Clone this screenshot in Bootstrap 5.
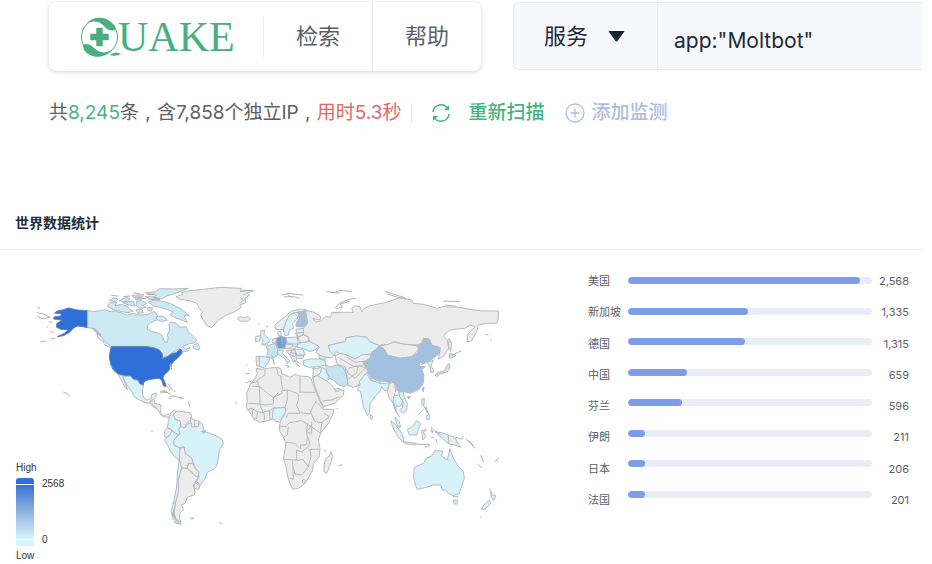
<!DOCTYPE html>
<html lang="zh-CN">
<head>
<meta charset="utf-8">
<meta name="viewport" content="width=device-width, initial-scale=1">
<title>QUAKE</title>
<link href="https://cdn.jsdelivr.net/npm/bootstrap@5.3.0/dist/css/bootstrap.min.css" rel="stylesheet">
<style>
body{font-family:Inter,"Noto Sans CJK SC",sans-serif;color:#5c5f66;background:#fff}
a{color:inherit;text-decoration:none}
.topbar{padding:2px 10px 0 49px;gap:32px}
.nav-card{border-radius:8px;box-shadow:0 1px 4px rgba(60,60,80,.22);height:69px;font-size:22px}
.brand-link{padding:0 28px 0 32px;border-right:1px solid #ececf1;height:40px}
.menu-link{padding:0 32px}
.menu-link + .menu-link{border-left:1px solid #eaebf2}
.search-box{height:68px;background:#f7f8fc;border:1px solid #e9ebf2;border-right:0;border-radius:6px 0 0 6px;color:#20293a;font-size:22px}
.kind{border:0;border-right:1px solid #e9ebf2;background:transparent;color:inherit;padding:0 32px 0 30px;gap:20px}
.query{border:0;background:transparent;color:inherit;padding:10px 16px 0;outline:0;min-width:0;font-size:21px}
.stats{padding:27px 10px 0 49px;font-size:19px;line-height:30px}
.comma{width:18px}
.green{color:#43b581}.red{color:#e0695f}.lilac{color:#aebbe3}
.rule{width:1px;height:19px;background:#e6e8f0;margin-left:10px}
.monitor{margin-left:21px;gap:6px;border:0;background:none;padding:0;font-weight:500}
.rescan-btn{margin-left:19px;gap:17px;border:0;background:none;padding:0;font-weight:500}
.world{padding-top:83px;margin-right:10px}
.world h2{font-size:14px;line-height:24px;font-weight:700;color:#222b3d;padding:0 15px 14px;margin:0;border-bottom:1px solid #eee}
.panels{display:grid;grid-template-columns:588fr 334fr}
.scale{position:absolute;left:16px;bottom:1px;font-size:10px;line-height:12px;color:#333;font-family:"Liberation Sans",sans-serif}
.ramp{width:18px;height:68px;border-radius:3px;background:linear-gradient(#2f70d8 0 6px,#fff 6px 7px,#3573d6 7px,#93b2dd 50%,#d7f3fb 61px,#fff 61px 62px,#d7f3fb 62px)}
.ranking{padding:22px 13px 0 0;font-size:11px;line-height:18px}
.ranking ul{height:237px}
.names{width:40px}
.bars{height:226px;padding-top:5px}
.bars .progress{height:7px;background:#eaedf6;border-radius:4px}
.bars .progress-bar{background:#7d9de8;border-radius:4px}
.counts{width:37px}
.land path{stroke:#b7babc;stroke-width:1;vector-effect:non-scaling-stroke;stroke-linejoin:round;fill:#ececec}
.land .lo{fill:#d7f2fa}.land .ca{fill:#cde9f4}.land .us{fill:#2f70d8;stroke:#5c80b8}.land .cn{fill:#a2c1e1}.land .de{fill:#759fd6}.land .mid{fill:#c5e3f2}
.land .edge{fill:none}
.land .isle{fill:none;stroke:#b0b4b6}
</style>
</head>
<body>
<header class="topbar d-flex">
 <nav class="nav-card d-flex align-items-stretch bg-white flex-shrink-0">
  <a href="#" class="brand-link d-flex align-items-center align-self-center" aria-label="QUAKE">
   <svg width="154" height="56" viewBox="81 8 154 56" fill="#4aae80">
    <circle cx="99.500" cy="36" r="18" fill="none" stroke="#4aae80" stroke-width="1"/>
    <path d="M87 22C93 15 106 15 112 22Q117 26 115 29Q109 31 104 25Q97 18 87 22Z"/>
    <path d="M83 44Q88 41 93 46Q101 55 112 49C105 58 90 58 84 49Z"/>
    <path d="M111 53Q116 50 121 53Q115 56 110 54Z"/>
    <path d="M97 27.500h5v6h6v5h-6v6h-5v-6h-6v-5h6z" stroke="#4aae80" stroke-width="1.500" stroke-linejoin="round"/>
    <text x="118" y="50" font-family="Liberation Serif,serif" font-size="42">UAKE</text>
   </svg>
  </a>
  <a href="#" class="menu-link d-flex align-items-center">检索</a>
  <a href="#" class="menu-link d-flex align-items-center">帮助</a>
 </nav>
 <form class="search-box d-flex flex-grow-1 overflow-hidden">
  <button type="button" class="kind d-flex align-items-center flex-shrink-0">服务
   <svg width="17" height="11" viewBox="0 0 17 11"><path d="M1 0h15q1 0 0 1L9.500 10q-1 1-2 0L1 1Q0 0 1 0Z" fill="#1c2536"/></svg>
  </button>
  <input class="query flex-grow-1" type="text" aria-label="查询" value="app:&quot;Moltbot&quot;">
 </form>
</header>

<div class="stats d-flex align-items-center text-nowrap">
 <div>共<span class="green">8,245</span>条<span class="comma d-inline-block text-center">,</span>含7,858个独立IP<span class="comma d-inline-block text-center">,</span><span class="red">用时5.3秒</span></div>
 <span class="rule"></span>
 <button type="button" class="rescan-btn green d-flex align-items-center">
  <svg width="20" height="20" viewBox="0 0 20 20" fill="none" stroke="#43b581" stroke-width="1.500"><path d="M2 9A8 8 0 0 1 17 6M18 11A8 8 0 0 1 3 14"/><path d="M18 2v5h-5zM2 18v-5h5z" fill="#43b581" stroke="none"/></svg>重新扫描</button>
 <button type="button" class="monitor lilac d-flex align-items-center">
  <svg width="20" height="20" viewBox="0 0 20 20" fill="none" stroke="#aebbe3" stroke-width="1.300"><circle cx="10" cy="10" r="9"/><path d="M10 5.500v9M5.500 10h9"/></svg>添加监测</button>
</div>

<section class="world">
 <h2>世界数据统计</h2>
 <div class="panels">
  <div class="position-relative">
   <svg class="land d-block w-100" viewBox="0 250 588 313" role="img" aria-label="世界地图">
    <!-- North America -->
    <g transform="translate(80 270) scale(.33333)">
     <path class="us" d="M23 122L-8 120L-35 114L-50 119L-68 123L-76 129L-55 132L-58 138L-78 141L-79 147L-55 150L-62 156L-70 161L-70 172L-57 178L-35 179L-45 189L-68 200L-50 197L-33 188L-20 175L-8 168L8 170L23 173Z"/>
     <path class="ca" d="M23 122L40 125L60 122L75 119L90 125L110 125L128 130L140 136L160 130L180 135L200 134L212 130L222 124L232 136L238 148L222 152L213 158L203 165L202 178L215 184L235 190L248 197L252 212L260 219L264 205L262 193L270 180L266 165L272 156L290 160L300 172L318 170L325 185L340 200L350 210L345 218L325 222L308 230L318 238L330 232L325 243L308 246L300 236L290 240L275 250L262 258L247 265L247 252L238 240L222 233L200 229L93 229L82 222L70 210L60 195L45 178L30 174L23 173Z"/>
     <path class="us" d="M93 230L200 230L222 234L238 240L247 252L247 266L262 260L278 250L290 248L298 238L305 240L306 250L292 265L280 275L275 283L270 290L266 303L252 315L249 325L256 340L257 350L250 347L245 330L236 325L218 327L203 330L192 335L190 346L180 342L172 330L160 328L152 318L135 318L115 313L100 300L92 282L88 262L90 245Z"/>
     <path class="lo" d="M115 314L135 319L152 319L160 329L172 331L180 343L190 347L187 365L190 382L202 390L213 385L216 372L229 370L228 380L220 390L212 392L208 400L195 397L178 390L160 378L158 368L145 352L133 330L128 320L135 338L143 360L135 352L126 335Z"/>
     <path d="M288 80L310 73L305 67L330 62L370 58L420 52L460 54L485 55L480 60L520 62L500 70L510 75L495 85L497 98L480 105L484 112L465 125L440 135L415 150L402 165L395 173L380 165L370 150L362 135L368 125L358 115L350 100L330 92L300 88Z"/>
     <path class="lo" d="M472 145L480 140L490 143L505 140L512 147L500 154L482 154Z"/>
     <path class="ca" d="M82 108L90 98L110 97L105 107L125 103L140 108L150 118L160 123L145 128L120 124L100 120ZM88 92L100 84L115 86L108 94ZM118 92L138 82L150 86L140 96ZM128 98L160 93L165 108L145 105ZM170 94L185 92L200 100L188 106L198 112L180 116L168 106ZM205 96L225 90L250 94L270 100L300 115L328 137L312 136L322 158L300 148L283 142L270 134L280 126L260 118L240 112L220 108ZM195 68L225 65L240 56L280 57L325 55L300 65L280 72L260 78L245 86L220 84L230 76ZM155 76L190 74L188 80L160 82ZM196 80L215 78L240 88L218 90ZM228 140L248 138L262 150L245 155L232 150ZM342 225L352 220L360 232L355 240L340 235ZM168 120L186 118L190 128L174 130ZM204 112L218 114L214 124L202 120ZM165 84L186 84L184 90L168 90Z"/>
     <path class="isle" d="M35 174L48 178L62 193L60 198L50 190L55 205L68 212L75 225L94 234M38 178L60 196M45 180L62 199M94 76L115 78M130 80L150 78M160 68L180 72M200 74L225 72M170 84L200 86M205 90L240 86M-128 112L-120 115M-128 128L-110 132L-90 142L-110 146L-128 140M-94 154L-84 158M-101 170L-96 172M-88 185L-78 188M-119 216L-103 213M-88 207L-75 205M-50 366L-38 371L-32 380M241 365L252 362L266 370M268 379L282 379M299 384L308 385M258 345L270 360M272 278L275 300M268 284L273 290"/>
    </g>
    <!-- South America -->
    <g transform="translate(100 380) scale(.33333)">
     <path d="M149 70L155 60L163 60L163 70L183 75L182 97L190 108L205 102L214 103L208 112L190 110L178 100L175 90L160 80Z"/>
     <path class="lo" d="M222 90L213 98L208 112L205 125L202 142L215 150L232 165L240 160L236 148L243 138L240 122L226 118L220 105L228 95Z"/>
     <path d="M228 95L235 93L255 96L270 98L275 108L272 120L260 130L255 143L246 145L243 138L240 122L226 118L220 105Z"/>
     <path d="M272 112L283 120L297 124L296 138L283 140L275 142L272 128ZM284 120L284 138M202 143L216 152L210 165L198 175L193 165L195 150Z"/>
     <path class="lo" d="M198 175L210 165L216 152L235 165L222 180L222 195L238 203L240 215L238 240L225 232L212 215L203 195L193 180Z"/>
     <path class="lo" d="M240 160L236 148L243 140L255 144L262 132L275 128L275 141L296 139L298 125L308 132L312 155L330 160L350 168L368 180L370 192L358 210L355 235L350 258L342 267L322 277L315 295L302 315L290 305L297 290L290 270L280 250L275 235L255 220L252 200L238 203L222 195L222 180L232 170Z"/>
     <path d="M245 263L262 265L275 275L285 288L295 292L280 315L285 335L283 345L262 352L255 370L245 375L250 390L240 400L238 415L243 425L228 420L222 400L226 370L235 335L235 300L240 275Z"/>
     <path d="M240 205L252 201L256 221L275 235L280 250L265 250L262 265L245 263L238 242ZM265 250L280 252L285 265L297 275L295 290L285 288L275 275L262 265ZM285 308L300 318L296 328L282 325Z"/>
     <path class="lo" d="M238 240L245 263L240 280L235 300L235 335L226 370L222 400L228 420L243 430L230 430L218 415L214 395L222 360L230 320L233 270Z"/>
     <path class="isle" d="M155 70L170 85M180 40L195 33L212 43M206 55L215 55M218 48L230 50L240 53L250 55M185 36L200 38M204 10L215 30M222 30L225 35M265 65L270 82M303 155L318 152L308 160M152 153L158 154M215 395L225 418M222 385L220 405L235 425M218 370L228 368M270 415L282 414L275 418M358 427L366 431M222 427L244 433"/>
    </g>
    <!-- Africa and the Middle East -->
    <g transform="translate(230 350) scale(.33333)">
     <path d="M78 55L95 58L110 55L140 52L152 55L155 70L165 75L180 82L195 73L210 78L235 80L243 85L248 100L258 125L270 155L280 172L278 178L312 178L308 195L295 220L272 250L265 270L270 295L268 320L250 340L248 360L235 385L220 405L205 415L188 418L180 400L172 375L168 350L160 325L165 300L168 280L160 260L150 245L148 228L152 215L140 215L128 207L110 213L88 217L72 207L60 188L48 172L52 155L50 130L60 105L75 85L82 70Z"/>
     <path class="edge" d="M105 58L105 75L82 90L78 97L62 99M82 92L88 110L130 143L155 130L157 112L152 80M140 55L145 75L155 80M88 110L90 162L55 160M65 108L88 110M210 78L210 127L256 127M157 122L175 120L205 132L205 150L200 165L210 190L175 190L168 205M130 143L145 128M130 143L130 162L105 165L90 162M172 120L172 150L165 172L130 174M210 188L240 192L248 170L258 155L278 175M242 188L255 215L275 218L298 200L282 190M232 222L270 248M245 215L245 250M178 218L215 212L232 222L230 245L232 265L228 285L212 285L212 297L195 280L168 277M160 328L200 330L200 300L215 306L240 285L235 262M188 332L190 388L180 385M190 352L195 372L215 375L235 350L218 328L200 332M235 350L243 320L240 298L268 298M148 228L168 230L178 218M175 230L172 255L160 262M50 180L65 175L68 195M65 175L82 185L80 205L70 205M82 185L102 188L105 212M102 185L118 182L120 208M120 182L130 174M148 215L160 200L168 180M275 218L272 250M230 245L245 225M245 250L232 248M100 188L92 170L90 162M222 388L228 395L220 400L216 393Z"/>
     <path class="lo" d="M130 175L165 172L168 185L158 198L150 217L138 214L127 205Z"/>
     <path d="M303 305L308 320L300 345L290 370L282 365L282 345L288 325L298 318Z"/>
     <path d="M248 83L262 75L290 92L305 105L315 118L328 118L342 122L340 135L315 160L280 170L270 150L255 110ZM250 57L275 52L272 68L262 76L248 83Z"/>
     <path class="edge" d="M278 153L305 150L328 140"/>
     <path class="lo" d="M220 32L240 27L270 27L288 34L286 46L262 50L235 52L220 45ZM275 52L287 58L298 86L290 92L262 78L272 68ZM314 118L328 114L326 124L316 124Z"/>
     <path class="mid" d="M287 43L300 51L320 45L340 53L350 75L355 100L345 110L325 105L310 90L298 84L290 65Z"/>
     <path d="M345 50L370 46L392 45L392 105L378 110L355 106L350 75Z"/>
     <path class="isle" d="M48 45L52 43M46 72L60 70M48 98L64 94M15 155L22 162M282 298L288 306M325 348L338 344M320 175L324 176M236 178L242 184"/>
    </g>
    <!-- Europe and Russia -->
    <g transform="translate(240 275) scale(.33333)">
     <path d="M197 106L222 112L243 125L240 135L218 131L228 142L245 137L255 125L272 126L275 113L300 112L340 112L335 100L345 92L360 95L365 110L373 100L390 92L440 82L460 75L480 68L515 75L520 85L550 88L575 95L590 100L610 95L660 97L690 103L730 108L775 108L775 130L770 145L740 145L715 150L710 170L695 198L682 200L682 180L705 155L690 150L675 160L650 162L630 165L610 182L622 195L626 220L612 242L595 252L600 230L600 218L572 212L568 192L550 190L545 205L530 210L495 208L460 200L445 210L430 208L418 212L390 200L380 187L350 183L320 188L315 200L290 205L265 212L270 225L285 235L275 248L248 246L228 232L238 215L210 200L205 185L190 178L190 160L203 145Z"/>
     <path d="M105 150L118 138L135 125L155 108L180 102L200 104L198 110L180 110L165 113L150 120L140 140L130 162L118 165L105 160Z"/>
     <path class="lo" d="M130 165L138 140L150 118L162 114L172 122L172 132L158 145L160 160L148 165L145 180L135 182Z"/>
     <path class="cn" d="M172 112L195 107L198 125L203 145L190 156L168 155L169 142L179 130Z"/>
     <path class="lo" d="M62 168L75 166L72 178L84 190L90 200L78 207L65 208L70 195L62 185ZM47 185L60 182L60 196L47 202ZM112 172L122 168L124 182L116 183ZM168 163L190 160L190 182L172 185ZM138 188L172 186L175 208L142 205ZM172 205L210 200L236 213L225 225L208 230L190 220L172 217ZM165 223L188 222L196 240L170 240ZM160 242L192 242L188 250L165 250ZM57 243L90 248L85 262L72 278L58 275ZM112 226L130 225L127 235L140 248L150 258L143 266L136 252L115 238ZM145 213L170 213L165 222L148 222ZM236 240L260 248L255 254L238 250Z"/>
     <path class="mid" d="M78 215L90 210L106 205L113 222L112 243L95 250L80 245L84 228Z"/>
     <path class="de" d="M108 190L122 183L138 188L140 208L135 220L115 222L108 205Z"/>
     <path d="M175 186L190 180L205 186L205 200L178 203ZM137 208L160 209L150 220L135 220ZM48 245L57 243L58 272L50 273ZM138 226L165 225L168 245L170 255L160 262L150 240ZM98 192L108 190L108 204L96 203Z"/>
     <path class="lo" d="M265 212L290 205L315 200L320 188L350 183L380 187L390 200L418 212L408 225L408 235L370 240L345 252L320 240L300 235L285 230L285 243L270 230Z"/>
     <path d="M285 243L300 235L320 240L345 252L370 238L400 240L392 252L375 262L380 275L355 300L345 310L325 295L315 275L292 268ZM355 272L376 278L385 288L370 305L362 325L340 338L325 330L322 315L350 292Z"/>
     <path class="edge" d="M300 250L325 265L345 275L370 270M320 245L345 262L375 258M325 280L350 272M155 225L152 240L165 245M150 232L170 236M125 188L127 205M178 190L165 175L190 172M65 210L86 210"/>
     <path class="isle" d="M0 50L38 45M10 60L15 58M0 68L10 75L0 85M125 60L150 55L165 58L190 60M132 66L160 64L178 70M140 56L158 70M258 50L285 52L300 46L335 50M270 52L300 54M285 100L298 85L325 74L348 70M288 102L308 96L300 88L330 78M55 145L58 148M80 150L82 158M95 240L101 262M100 252L103 270M137 270L148 275L142 278M165 262L180 275M215 282L225 278M162 256L182 266M434 49L455 56L475 62L495 68M440 56L470 66L498 72M610 78L660 80M615 90L650 94M735 178L745 180M750 195L755 195"/>
    </g>
    <!-- East Asia -->
    <g transform="translate(350 275) scale(.33333)">
     <path d="M90 213L115 208L130 201L165 208L200 212L208 222L185 245L150 250L110 240L105 225Z"/>
     <path class="cn" d="M38 262L60 250L65 232L90 213L105 225L110 240L150 250L185 245L200 235L208 222L200 212L218 205L220 190L238 192L245 210L270 218L268 235L250 250L230 262L215 268L222 262L208 262L210 275L225 275L215 285L222 300L220 325L205 345L180 355L165 350L150 352L140 345L135 325L110 320L75 315L55 300L50 280ZM216 340L222 336L220 350ZM171 366L181 363L177 372Z"/>
     <path class="lo" d="M45 297L55 302L62 315L90 325L108 325L120 322L112 345L105 348L95 335L90 350L75 365L60 385L58 415L52 422L40 395L32 350L22 345L30 330L28 320L40 305ZM130 362L145 360L158 375L155 390L145 395L138 390L138 410L132 395ZM145 352L160 350L162 365L172 385L170 405L158 415L148 405L157 398L160 380L150 365Z"/>
     <path class="mid" d="M255 300L262 293L285 287L290 272L298 265L300 280L290 292L270 297L260 305ZM297 248L300 235L318 242L302 250Z"/>
     <path d="M62 308L92 320L92 326L64 316ZM118 325L132 322L138 345L133 360L128 384L118 370L112 350ZM232 262L250 256L243 272L252 290L243 293L240 275ZM62 418L68 425L65 434L60 430ZM297 190L305 205L302 230L296 215Z"/>
     <path class="isle" d="M305 242L335 226M130 385L138 410L150 428"/>
    </g>
    <!-- South-east Asia and Oceania -->
    <g transform="translate(370 380) scale(.33333)">
     <path class="lo" d="M62 122L75 132L92 155L102 175L100 187L85 172L72 150ZM100 185L140 190L135 195L105 191ZM75 112L88 125L92 142L82 138ZM112 148L125 142L140 122L152 130L145 148L140 165L118 165ZM195 155L215 158L235 165L235 192L222 180L205 165ZM155 58L163 55L162 75L156 74ZM168 108L178 104L180 118L170 118ZM155 152L170 148L160 156L168 170L158 180Z"/>
     <path d="M235 165L255 172L262 188L272 202L255 195L237 192Z"/>
     <path class="lo" d="M133 262L160 250L170 235L185 228L195 212L218 213L215 228L232 240L240 206L250 235L262 255L280 275L283 295L275 320L268 340L250 347L235 340L225 328L218 332L212 315L190 315L170 322L142 328L137 318L130 290ZM250 360L264 361L260 373L252 371ZM362 335L368 345L378 348L370 362L363 350ZM357 361L362 370L348 385L335 390L338 380Z"/>
     <path class="isle" d="M160 76L170 92L178 105M164 82L174 100M168 78L172 96M145 105L160 88M185 140L187 160M180 152L190 155M140 193L180 193M165 202L180 196M198 178L202 190M258 172L275 178L280 168M288 178L300 188L315 205M296 182L312 198M332 226L342 248M323 252L336 264M375 245L386 234M378 240L384 246M358 328L366 338M330 410L334 412M248 350L266 350M184 172L192 174M190 150L215 165"/>
    </g>
   </svg>
   <div class="scale">
    <div>High</div>
    <div class="d-flex my-1"><div class="ramp"></div><div class="d-flex flex-column justify-content-between ms-2"><span>2568</span><span>0</span></div></div>
    <div>Low</div>
   </div>
  </div>
  <div class="ranking d-flex align-items-start">
   <ul class="names list-unstyled m-0 d-flex flex-column justify-content-between text-nowrap"><li>美国</li><li>新加坡</li><li>德国</li><li>中国</li><li>芬兰</li><li>伊朗</li><li>日本</li><li>法国</li></ul>
   <div class="bars flex-grow-1 d-flex flex-column justify-content-between">
    <div class="progress"><div class="progress-bar" style="width:95%"></div></div>
    <div class="progress"><div class="progress-bar" style="width:49%"></div></div>
    <div class="progress"><div class="progress-bar" style="width:48%"></div></div>
    <div class="progress"><div class="progress-bar" style="width:24%"></div></div>
    <div class="progress"><div class="progress-bar" style="width:22%"></div></div>
    <div class="progress"><div class="progress-bar" style="width:7%"></div></div>
    <div class="progress"><div class="progress-bar" style="width:7%"></div></div>
    <div class="progress"><div class="progress-bar" style="width:7%"></div></div>
   </div>
   <ul class="counts list-unstyled m-0 d-flex flex-column justify-content-between text-end"><li>2,568</li><li>1,335</li><li>1,315</li><li>659</li><li>596</li><li>211</li><li>206</li><li>201</li></ul>
  </div>
 </div>
</section>
<script src="https://cdn.jsdelivr.net/npm/bootstrap@5.3.0/dist/js/bootstrap.bundle.min.js"></script>
</body>
</html>
